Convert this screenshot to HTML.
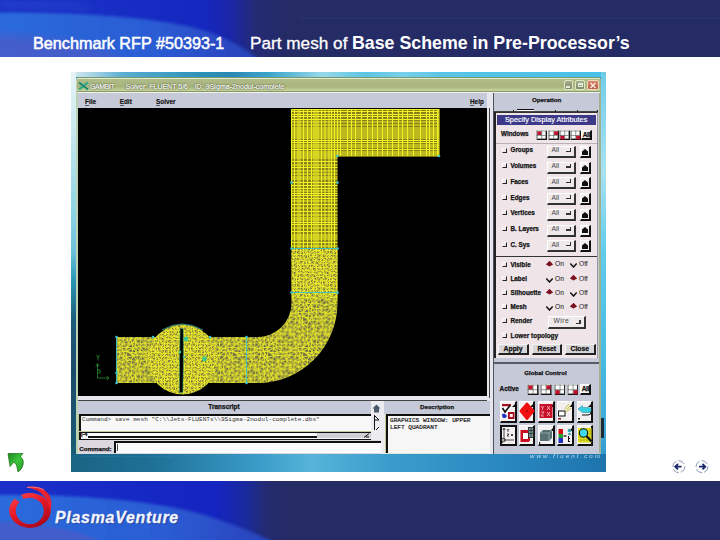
<!DOCTYPE html><html><head><meta charset="utf-8"><style>
*{margin:0;padding:0;box-sizing:border-box}
html,body{width:720px;height:540px;overflow:hidden;background:#fff;font-family:"Liberation Sans",sans-serif}
.a{position:absolute}
.ht{color:#fff;white-space:nowrap;line-height:1}
.t{position:absolute;white-space:nowrap;line-height:1}
.mono{font-family:"Liberation Mono",monospace}
</style></head><body>
<svg class="a" style="left:0;top:0" width="720" height="57" viewBox="0 0 720 57">
<defs>
<linearGradient id="hg" x1="0" x2="1" y1="0" y2="0"><stop offset="0" stop-color="#1c34c8"/><stop offset=".28" stop-color="#1428c0"/><stop offset=".32" stop-color="#1a26a8"/><stop offset=".355" stop-color="#242b74"/><stop offset=".40" stop-color="#242b65"/><stop offset="1" stop-color="#242b65"/></linearGradient>
<linearGradient id="hs" x1="0" x2="1" y1="0" y2="0"><stop offset="0" stop-color="#2c6cdc"/><stop offset=".6" stop-color="#2a5cd4"/><stop offset="1" stop-color="#2840b8"/></linearGradient>
<filter id="bl" x="-20%" y="-50%" width="140%" height="200%"><feGaussianBlur stdDeviation="1.6"/></filter><filter id="bl3" x="-20%" y="-50%" width="140%" height="200%"><feGaussianBlur stdDeviation="4"/></filter>
</defs>
<rect width="720" height="57" fill="url(#hg)"/>
<path d="M-10,13 C60,12 140,15 195,28 C225,36 245,48 262,62 L-10,62 Z" fill="url(#hs)" filter="url(#bl)"/>
<path d="M-10,34 C40,36 90,42 130,62 L-10,62 Z" fill="#4a5cc8" opacity=".85" filter="url(#bl3)"/>
<path d="M0,4 C30,3 60,5 90,8" stroke="#4a78e0" stroke-width="4" opacity=".3" fill="none" filter="url(#bl3)"/>
<path d="M300,18 H720" stroke="#3a4aa0" stroke-width="1" opacity=".35"/>
</svg>
<div class="a ht" style="left:33px;top:35px;font-size:16.2px;-webkit-text-stroke:.5px #fff">Benchmark RFP #50393-1</div>
<div class="a ht" style="left:250px;top:34.5px;font-size:17.2px;-webkit-text-stroke:.3px #fff">Part mesh of</div>
<div class="a ht" style="left:352px;top:35px;font-size:17.8px;font-weight:bold">Base Scheme in Pre-Processor’s</div>
<div class="a" style="left:71px;top:72px;width:535px;height:400px;background:#2a8cb8"></div>
<div class="a" style="left:71px;top:72px;width:535px;height:5px;background:linear-gradient(90deg,#d8ecf0 0%,#a8d4e4 4%,#58acd0 10%,#2a90b8 25%,#2a88b4 30%,#3aa4cc 37%,#98d8ea 47%,#5cc4e4 55%,#78d0ea 62%,#58c4e6 70%,#48c0e8 100%)"></div>
<div class="a" style="left:71px;top:72px;width:5px;height:400px;background:linear-gradient(180deg,#e8f4f6 0%,#c8e8f0 15%,#8cd4e6 35%,#6cc0dc 45%,#2a98b8 52%,#1c5c7c 62%,#1a4a6a 75%,#1a6078 100%)"></div>
<div class="a" style="left:601px;top:72px;width:5px;height:400px;background:linear-gradient(180deg,#70cce8 0%,#a8e2f2 25%,#60ccec 45%,#48bce4 70%,#3aa8d8 90%,#2a90c4 100%)"></div>
<div class="a" style="left:71px;top:454px;width:535px;height:18px;background:linear-gradient(90deg,#1a6484 0%,#1e7096 15%,#3a9cc8 35%,#56b4d8 45%,#3a9ccc 60%,#2a88c0 80%,#1e74ac 100%)"></div>
<div class="a" style="left:76px;top:77px;width:525px;height:377px;background:#c0ca98;border:1px solid #7a9870;border-left:2px solid #bcd2b4;border-bottom:1px solid #dce8d4;border-right:2px solid #a0b090;border-radius:3px 3px 0 0"></div>
<div class="a" style="left:77px;top:78px;width:523px;height:15px;background:linear-gradient(180deg,#e0ecd0 0px,#e0ecd0 1px,#b0bc88 1.5px,#a8b47c 9px,#c4d098 12px,#c4d098 12.8px,#8a9a70 13.5px,#8a9a70 14px,#eef2e8 14.2px)"></div>
<svg class="a" style="left:78px;top:82px" width="11" height="8" viewBox="0 0 11 8"><path d="M1,0.5 L10,7.5 M10,0.5 L1,7.5" stroke="#2aa888" stroke-width="2.2"/><path d="M1,0.5 L10,7.5" stroke="#145a48" stroke-width="0.8"/></svg>
<div class="t" style="left:90px;top:83.1px;font-size:7px;color:#ffffff;text-shadow:0 0 1px #3a4420,0 0 1px #3a4420,0 0 2px #6a7848;-webkit-text-stroke:.2px #fff;letter-spacing:-.4px">GAMBIT</div>
<div class="t" style="left:125.5px;top:83.1px;font-size:7px;color:#ffffff;text-shadow:0 0 1px #3a4420,0 0 1px #3a4420,0 0 2px #6a7848;-webkit-text-stroke:.2px #fff">Solver: FLUENT 5/6</div>
<div class="t" style="left:194.6px;top:83.1px;font-size:7px;color:#ffffff;text-shadow:0 0 1px #3a4420,0 0 1px #3a4420,0 0 2px #6a7848;-webkit-text-stroke:.2px #fff;letter-spacing:.05px">ID: 9Sigma-2nodul-complete</div>
<div class="a" style="left:563.5px;top:80px;width:9.5px;height:10px;background:linear-gradient(180deg,#a4b088,#7c8a68);border:1px solid #dfe6c6;border-radius:2px"></div>
<div class="a" style="left:566px;top:86px;width:4px;height:2px;background:#e8eedc"></div>
<div class="a" style="left:575px;top:80px;width:10px;height:10px;background:linear-gradient(180deg,#a4b088,#7c8a68);border:1px solid #dfe6c6;border-radius:2px"></div>
<div class="a" style="left:577.5px;top:83px;width:5px;height:4px;border:1px solid #e8eedc;border-top-width:2px"></div>
<div class="a" style="left:587px;top:80px;width:11.5px;height:10px;background:linear-gradient(180deg,#d8886c,#b85a40);border:1px solid #f0d8c0;border-radius:2px"></div>
<svg class="a" style="left:589px;top:81.5px" width="8" height="7" viewBox="0 0 8 7"><path d="M1.5,1 L6.5,6 M6.5,1 L1.5,6" stroke="#fbeee6" stroke-width="1.4"/></svg>
<div class="a" style="left:78px;top:93px;width:411px;height:15px;background:#c6c9d7"></div>
<div class="t" style="left:85px;top:98.5px;font-size:6.4px;color:#111;font-weight:bold;-webkit-text-stroke:.15px #111">File</div>
<div class="a" style="left:85px;top:104.5px;width:4px;height:1px;background:#556"></div>
<div class="t" style="left:119.7px;top:98.5px;font-size:6.4px;color:#111;font-weight:bold;-webkit-text-stroke:.15px #111">Edit</div>
<div class="a" style="left:120px;top:104.5px;width:4px;height:1px;background:#556"></div>
<div class="t" style="left:156px;top:98.5px;font-size:6.4px;color:#111;font-weight:bold;-webkit-text-stroke:.15px #111">Solver</div>
<div class="a" style="left:156px;top:104.5px;width:4px;height:1px;background:#556"></div>
<div class="t" style="left:470px;top:98.5px;font-size:6.4px;color:#111;font-weight:bold;-webkit-text-stroke:.15px #111">Help</div>
<div class="a" style="left:470px;top:104.5px;width:4px;height:1px;background:#556"></div>
<div class="a" style="left:487px;top:93px;width:7px;height:361px;background:#e6e6ec"></div>
<div class="a" style="left:489px;top:108px;width:1px;height:290px;background:#444"></div>
<div class="a" style="left:493px;top:93px;width:1px;height:361px;background:#505060"></div>
<div class="a" style="left:78px;top:108px;width:409px;height:288px;background:#000"></div>
<svg class="a" style="left:0;top:0" width="720" height="540" viewBox="0 0 720 540"><defs><clipPath id="gc"><rect x="78" y="108" width="409" height="288"/></clipPath><pattern id="pu" width="35.2" height="35.2" patternUnits="userSpaceOnUse"><rect width="35.2" height="35.2" fill="#6a6a48"/><path d="M-5.1 -5.2L-0.9 -5.1M-5.1 -5.2L-4.4 0.3M-5.1 -5.2L-0.4 -0.8M-4.4 0.3L-0.4 -0.8M-4.4 0.3L-4.0 3.3M-4.4 0.3L0.4 3.4M-4.0 3.3L0.4 3.4M-4.0 3.3L-3.4 9.5M-4.0 3.3L0.1 8.5M-3.4 9.5L0.1 8.5M-3.4 9.5L-3.5 13.9M-3.4 9.5L-1.1 13.2M-3.5 13.9L-1.1 13.2M-3.5 13.9L-4.7 17.4M-3.5 13.9L-1.1 17.4M-4.7 17.4L-1.1 17.4M-4.7 17.4L-5.4 22.3M-4.7 17.4L-1.0 21.0M-5.4 22.3L-1.0 21.0M-5.4 22.3L-5.5 25.4M-5.4 22.3L-0.2 27.2M-5.5 25.4L-0.2 27.2M-5.5 25.4L-5.1 30.0M-0.2 27.2L-5.1 30.0M-5.1 30.0L-0.9 30.1M-5.1 30.0L-4.4 35.5M-0.9 30.1L-4.4 35.5M-4.4 35.5L-0.4 34.4M-4.4 35.5L-4.0 38.5M-4.4 35.5L0.4 38.6M-0.9 -5.1L4.7 -4.7M-0.9 -5.1L-0.4 -0.8M-0.9 -5.1L4.7 1.1M-0.4 -0.8L4.7 1.1M-0.4 -0.8L0.4 3.4M-0.4 -0.8L4.6 4.2M0.4 3.4L4.6 4.2M0.4 3.4L0.1 8.5M0.4 3.4L5.5 7.7M0.1 8.5L5.5 7.7M0.1 8.5L-1.1 13.2M0.1 8.5L5.3 12.7M-1.1 13.2L5.3 12.7M-1.1 13.2L-1.1 17.4M5.3 12.7L-1.1 17.4M-1.1 17.4L3.5 16.7M-1.1 17.4L-1.0 21.0M3.5 16.7L-1.0 21.0M-1.0 21.0L3.9 22.8M-1.0 21.0L-0.2 27.2M-1.0 21.0L3.6 26.6M-0.2 27.2L3.6 26.6M-0.2 27.2L-0.9 30.1M-0.2 27.2L4.7 30.5M-0.9 30.1L4.7 30.5M-0.9 30.1L-0.4 34.4M-0.9 30.1L4.7 36.3M-0.4 34.4L4.7 36.3M-0.4 34.4L0.4 38.6M-0.4 34.4L4.6 39.4M4.7 -4.7L8.9 -3.5M4.7 -4.7L4.7 1.1M4.7 -4.7L8.9 -1.0M4.7 1.1L8.9 -1.0M4.7 1.1L4.6 4.2M4.7 1.1L7.7 3.7M4.6 4.2L7.7 3.7M4.6 4.2L5.5 7.7M7.7 3.7L5.5 7.7M5.5 7.7L9.2 8.6M5.5 7.7L5.3 12.7M5.5 7.7L8.4 13.4M5.3 12.7L8.4 13.4M5.3 12.7L3.5 16.7M5.3 12.7L8.7 17.1M3.5 16.7L8.7 17.1M3.5 16.7L3.9 22.8M8.7 17.1L3.9 22.8M3.9 22.8L9.5 22.5M3.9 22.8L3.6 26.6M9.5 22.5L3.6 26.6M3.6 26.6L8.2 26.6M3.6 26.6L4.7 30.5M3.6 26.6L8.9 31.7M4.7 30.5L8.9 31.7M4.7 30.5L4.7 36.3M8.9 31.7L4.7 36.3M4.7 36.3L8.9 34.2M4.7 36.3L4.6 39.4M4.7 36.3L7.7 38.9M8.9 -3.5L13.7 -4.2M8.9 -3.5L8.9 -1.0M13.7 -4.2L8.9 -1.0M8.9 -1.0L13.8 -0.5M8.9 -1.0L7.7 3.7M13.8 -0.5L7.7 3.7M7.7 3.7L14.4 3.5M7.7 3.7L9.2 8.6M14.4 3.5L9.2 8.6M9.2 8.6L13.0 9.4M9.2 8.6L8.4 13.4M13.0 9.4L8.4 13.4M8.4 13.4L12.4 13.2M8.4 13.4L8.7 17.1M8.4 13.4L12.1 18.0M8.7 17.1L12.1 18.0M8.7 17.1L9.5 22.5M8.7 17.1L13.8 22.2M9.5 22.5L13.8 22.2M9.5 22.5L8.2 26.6M9.5 22.5L14.1 26.0M8.2 26.6L14.1 26.0M8.2 26.6L8.9 31.7M14.1 26.0L8.9 31.7M8.9 31.7L13.7 31.0M8.9 31.7L8.9 34.2M13.7 31.0L8.9 34.2M8.9 34.2L13.8 34.7M8.9 34.2L7.7 38.9M13.8 34.7L7.7 38.9M13.7 -4.2L16.5 -4.5M13.7 -4.2L13.8 -0.5M13.7 -4.2L17.8 -0.1M13.8 -0.5L17.8 -0.1M13.8 -0.5L14.4 3.5M13.8 -0.5L18.4 5.5M14.4 3.5L18.4 5.5M14.4 3.5L13.0 9.4M18.4 5.5L13.0 9.4M13.0 9.4L17.5 9.2M13.0 9.4L12.4 13.2M17.5 9.2L12.4 13.2M12.4 13.2L16.5 13.7M12.4 13.2L12.1 18.0M16.5 13.7L12.1 18.0M12.1 18.0L18.0 18.8M12.1 18.0L13.8 22.2M18.0 18.8L13.8 22.2M13.8 22.2L18.4 21.5M13.8 22.2L14.1 26.0M18.4 21.5L14.1 26.0M14.1 26.0L17.3 26.8M14.1 26.0L13.7 31.0M17.3 26.8L13.7 31.0M13.7 31.0L16.5 30.7M13.7 31.0L13.8 34.7M13.7 31.0L17.8 35.1M13.8 34.7L17.8 35.1M13.8 34.7L14.4 38.7M17.8 35.1L14.4 38.7M16.5 -4.5L21.5 -4.6M16.5 -4.5L17.8 -0.1M16.5 -4.5L21.2 -0.9M17.8 -0.1L21.2 -0.9M17.8 -0.1L18.4 5.5M17.8 -0.1L20.9 5.0M18.4 5.5L20.9 5.0M18.4 5.5L17.5 9.2M18.4 5.5L21.1 8.2M17.5 9.2L21.1 8.2M17.5 9.2L16.5 13.7M17.5 9.2L21.7 14.1M16.5 13.7L21.7 14.1M16.5 13.7L18.0 18.8M16.5 13.7L21.0 17.5M18.0 18.8L21.0 17.5M18.0 18.8L18.4 21.5M21.0 17.5L18.4 21.5M18.4 21.5L22.1 22.9M18.4 21.5L17.3 26.8M22.1 22.9L17.3 26.8M17.3 26.8L22.8 27.3M17.3 26.8L16.5 30.7M17.3 26.8L21.5 30.6M16.5 30.7L21.5 30.6M16.5 30.7L17.8 35.1M21.5 30.6L17.8 35.1M17.8 35.1L21.2 34.3M17.8 35.1L18.4 40.7M21.2 34.3L18.4 40.7M21.5 -4.6L27.5 -3.9M21.5 -4.6L21.2 -0.9M27.5 -3.9L21.2 -0.9M21.2 -0.9L26.1 0.9M21.2 -0.9L20.9 5.0M21.2 -0.9L27.5 3.6M20.9 5.0L27.5 3.6M20.9 5.0L21.1 8.2M20.9 5.0L25.6 8.2M21.1 8.2L25.6 8.2M21.1 8.2L21.7 14.1M21.1 8.2L25.8 13.2M21.7 14.1L25.8 13.2M21.7 14.1L21.0 17.5M21.7 14.1L26.6 17.0M21.0 17.5L26.6 17.0M21.0 17.5L22.1 22.9M21.0 17.5L25.2 21.8M22.1 22.9L25.2 21.8M22.1 22.9L22.8 27.3M25.2 21.8L22.8 27.3M22.8 27.3L26.1 26.6M22.8 27.3L21.5 30.6M26.1 26.6L21.5 30.6M21.5 30.6L27.5 31.3M21.5 30.6L21.2 34.3M27.5 31.3L21.2 34.3M21.2 34.3L26.1 36.1M21.2 34.3L20.9 40.2M21.2 34.3L27.5 38.8M27.5 -3.9L30.1 -5.2M27.5 -3.9L26.1 0.9M30.1 -5.2L26.1 0.9M26.1 0.9L30.8 0.3M26.1 0.9L27.5 3.6M30.8 0.3L27.5 3.6M27.5 3.6L31.2 3.3M27.5 3.6L25.6 8.2M27.5 3.6L31.8 9.5M25.6 8.2L31.8 9.5M25.6 8.2L25.8 13.2M31.8 9.5L25.8 13.2M25.8 13.2L31.7 13.9M25.8 13.2L26.6 17.0M31.7 13.9L26.6 17.0M26.6 17.0L30.5 17.4M26.6 17.0L25.2 21.8M30.5 17.4L25.2 21.8M25.2 21.8L29.8 22.3M25.2 21.8L26.1 26.6M29.8 22.3L26.1 26.6M26.1 26.6L29.7 25.4M26.1 26.6L27.5 31.3M26.1 26.6L30.1 30.0M27.5 31.3L30.1 30.0M27.5 31.3L26.1 36.1M27.5 31.3L30.8 35.5M26.1 36.1L30.8 35.5M26.1 36.1L27.5 38.8M30.8 35.5L27.5 38.8M30.1 -5.2L34.3 -5.1M30.1 -5.2L30.8 0.3M30.1 -5.2L34.8 -0.8M30.8 0.3L34.8 -0.8M30.8 0.3L31.2 3.3M34.8 -0.8L31.2 3.3M31.2 3.3L35.6 3.4M31.2 3.3L31.8 9.5M35.6 3.4L31.8 9.5M31.8 9.5L35.3 8.5M31.8 9.5L31.7 13.9M31.8 9.5L34.1 13.2M31.7 13.9L34.1 13.2M31.7 13.9L30.5 17.4M31.7 13.9L34.1 17.4M30.5 17.4L34.1 17.4M30.5 17.4L29.8 22.3M34.1 17.4L29.8 22.3M29.8 22.3L34.2 21.0M29.8 22.3L29.7 25.4M34.2 21.0L29.7 25.4M29.7 25.4L35.0 27.2M29.7 25.4L30.1 30.0M29.7 25.4L34.3 30.1M30.1 30.0L34.3 30.1M30.1 30.0L30.8 35.5M30.1 30.0L34.8 34.4M30.8 35.5L34.8 34.4M30.8 35.5L31.2 38.5M30.8 35.5L35.6 38.6M34.3 -5.1L39.9 -4.7M34.3 -5.1L34.8 -0.8M39.9 -4.7L34.8 -0.8M34.8 -0.8L39.9 1.1M34.8 -0.8L35.6 3.4M39.9 1.1L35.6 3.4M35.6 3.4L39.8 4.2M35.6 3.4L35.3 8.5M35.6 3.4L40.7 7.7M35.3 8.5L40.7 7.7M35.3 8.5L34.1 13.2M40.7 7.7L34.1 13.2M34.1 13.2L40.5 12.7M34.1 13.2L34.1 17.4M40.5 12.7L34.1 17.4M34.1 17.4L38.7 16.7M34.1 17.4L34.2 21.0M38.7 16.7L34.2 21.0M34.2 21.0L39.1 22.8M34.2 21.0L35.0 27.2M34.2 21.0L38.8 26.6M35.0 27.2L38.8 26.6M35.0 27.2L34.3 30.1M38.8 26.6L34.3 30.1M34.3 30.1L39.9 30.5M34.3 30.1L34.8 34.4M34.3 30.1L39.9 36.3M34.8 34.4L39.9 36.3M34.8 34.4L35.6 38.6M34.8 34.4L39.8 39.4" stroke="#e6e428" stroke-width="1" fill="none"/></pattern><pattern id="pd" width="33" height="33" patternUnits="userSpaceOnUse"><rect width="33" height="33" fill="#74723e"/><path d="M-3.9 -3.3L0.2 -2.5M-3.9 -3.3L-3.7 -0.5M-3.9 -3.3L0.9 0.3M-3.7 -0.5L0.9 0.3M-3.7 -0.5L-3.7 3.2M-3.7 -0.5L0.1 4.2M-3.7 3.2L0.1 4.2M-3.7 3.2L-4.0 6.5M-3.7 3.2L-0.1 7.3M-4.0 6.5L-0.1 7.3M-4.0 6.5L-3.8 10.8M-4.0 6.5L0.7 9.3M-3.8 10.8L0.7 9.3M-3.8 10.8L-2.4 13.3M-3.8 10.8L-0.5 12.8M-2.4 13.3L-0.5 12.8M-2.4 13.3L-3.8 17.4M-2.4 13.3L-0.5 16.7M-3.8 17.4L-0.5 16.7M-3.8 17.4L-3.7 19.5M-3.8 17.4L-0.5 19.6M-3.7 19.5L-0.5 19.6M-3.7 19.5L-4.3 22.9M-3.7 19.5L-0.7 23.9M-4.3 22.9L-0.7 23.9M-4.3 22.9L-3.4 26.4M-0.7 23.9L-3.4 26.4M-3.4 26.4L-0.3 26.3M-3.4 26.4L-3.9 29.7M-0.3 26.3L-3.9 29.7M-3.9 29.7L0.2 30.5M-3.9 29.7L-3.7 32.5M0.2 30.5L-3.7 32.5M-3.7 32.5L0.9 33.3M-3.7 32.5L-3.7 36.2M0.9 33.3L-3.7 36.2M0.2 -2.5L2.5 -3.2M0.2 -2.5L0.9 0.3M2.5 -3.2L0.9 0.3M0.9 0.3L3.1 0.8M0.9 0.3L0.1 4.2M3.1 0.8L0.1 4.2M0.1 4.2L3.3 3.4M0.1 4.2L-0.1 7.3M0.1 4.2L3.3 5.6M-0.1 7.3L3.3 5.6M-0.1 7.3L0.7 9.3M-0.1 7.3L3.2 9.3M0.7 9.3L3.2 9.3M0.7 9.3L-0.5 12.8M3.2 9.3L-0.5 12.8M-0.5 12.8L2.3 13.8M-0.5 12.8L-0.5 16.7M-0.5 12.8L2.6 16.4M-0.5 16.7L2.6 16.4M-0.5 16.7L-0.5 19.6M2.6 16.4L-0.5 19.6M-0.5 19.6L3.8 19.9M-0.5 19.6L-0.7 23.9M3.8 19.9L-0.7 23.9M-0.7 23.9L3.0 23.1M-0.7 23.9L-0.3 26.3M-0.7 23.9L3.4 27.0M-0.3 26.3L3.4 27.0M-0.3 26.3L0.2 30.5M3.4 27.0L0.2 30.5M0.2 30.5L2.5 29.8M0.2 30.5L0.9 33.3M2.5 29.8L0.9 33.3M0.9 33.3L3.1 33.8M0.9 33.3L0.1 37.2M3.1 33.8L0.1 37.2M2.5 -3.2L7.5 -3.8M2.5 -3.2L3.1 0.8M7.5 -3.8L3.1 0.8M3.1 0.8L6.1 -0.4M3.1 0.8L3.3 3.4M6.1 -0.4L3.3 3.4M3.3 3.4L7.1 3.3M3.3 3.4L3.3 5.6M3.3 3.4L6.7 7.1M3.3 5.6L6.7 7.1M3.3 5.6L3.2 9.3M6.7 7.1L3.2 9.3M3.2 9.3L7.4 9.8M3.2 9.3L2.3 13.8M7.4 9.8L2.3 13.8M2.3 13.8L6.8 13.2M2.3 13.8L2.6 16.4M6.8 13.2L2.6 16.4M2.6 16.4L6.6 16.9M2.6 16.4L3.8 19.9M6.6 16.9L3.8 19.9M3.8 19.9L6.5 19.9M3.8 19.9L3.0 23.1M6.5 19.9L3.0 23.1M3.0 23.1L6.6 24.0M3.0 23.1L3.4 27.0M6.6 24.0L3.4 27.0M3.4 27.0L7.0 27.2M3.4 27.0L2.5 29.8M7.0 27.2L2.5 29.8M2.5 29.8L7.5 29.2M2.5 29.8L3.1 33.8M7.5 29.2L3.1 33.8M3.1 33.8L6.1 32.6M3.1 33.8L3.3 36.4M6.1 32.6L3.3 36.4M7.5 -3.8L9.3 -2.4M7.5 -3.8L6.1 -0.4M7.5 -3.8L10.0 0.9M6.1 -0.4L10.0 0.9M6.1 -0.4L7.1 3.3M6.1 -0.4L10.6 2.6M7.1 3.3L10.6 2.6M7.1 3.3L6.7 7.1M7.1 3.3L9.1 6.5M6.7 7.1L9.1 6.5M6.7 7.1L7.4 9.8M6.7 7.1L9.0 9.4M7.4 9.8L9.0 9.4M7.4 9.8L6.8 13.2M7.4 9.8L9.0 13.5M6.8 13.2L9.0 13.5M6.8 13.2L6.6 16.9M9.0 13.5L6.6 16.9M6.6 16.9L10.5 17.3M6.6 16.9L6.5 19.9M10.5 17.3L6.5 19.9M6.5 19.9L9.2 20.2M6.5 19.9L6.6 24.0M9.2 20.2L6.6 24.0M6.6 24.0L10.2 22.4M6.6 24.0L7.0 27.2M10.2 22.4L7.0 27.2M7.0 27.2L10.7 27.3M7.0 27.2L7.5 29.2M10.7 27.3L7.5 29.2M7.5 29.2L9.3 30.6M7.5 29.2L6.1 32.6M7.5 29.2L10.0 33.9M6.1 32.6L10.0 33.9M6.1 32.6L7.1 36.3M6.1 32.6L10.6 35.6M9.3 -2.4L12.3 -2.3M9.3 -2.4L10.0 0.9M12.3 -2.3L10.0 0.9M10.0 0.9L13.0 -0.0M10.0 0.9L10.6 2.6M13.0 -0.0L10.6 2.6M10.6 2.6L14.2 4.0M10.6 2.6L9.1 6.5M14.2 4.0L9.1 6.5M9.1 6.5L12.5 6.5M9.1 6.5L9.0 9.4M12.5 6.5L9.0 9.4M9.0 9.4L13.2 9.6M9.0 9.4L9.0 13.5M13.2 9.6L9.0 13.5M9.0 13.5L12.6 12.8M9.0 13.5L10.5 17.3M9.0 13.5L13.6 15.5M10.5 17.3L13.6 15.5M10.5 17.3L9.2 20.2M13.6 15.5L9.2 20.2M9.2 20.2L13.3 19.7M9.2 20.2L10.2 22.4M9.2 20.2L12.2 22.8M10.2 22.4L12.2 22.8M10.2 22.4L10.7 27.3M10.2 22.4L13.4 26.4M10.7 27.3L13.4 26.4M10.7 27.3L9.3 30.6M10.7 27.3L12.3 30.7M9.3 30.6L12.3 30.7M9.3 30.6L10.0 33.9M12.3 30.7L10.0 33.9M10.0 33.9L13.0 33.0M10.0 33.9L10.6 35.6M10.0 33.9L14.2 37.0M12.3 -2.3L16.9 -3.4M12.3 -2.3L13.0 -0.0M16.9 -3.4L13.0 -0.0M13.0 -0.0L17.1 0.9M13.0 -0.0L14.2 4.0M17.1 0.9L14.2 4.0M14.2 4.0L15.7 2.8M14.2 4.0L12.5 6.5M14.2 4.0L15.6 7.2M12.5 6.5L15.6 7.2M12.5 6.5L13.2 9.6M12.5 6.5L16.0 9.2M13.2 9.6L16.0 9.2M13.2 9.6L12.6 12.8M13.2 9.6L16.3 14.0M12.6 12.8L16.3 14.0M12.6 12.8L13.6 15.5M16.3 14.0L13.6 15.5M13.6 15.5L17.1 16.0M13.6 15.5L13.3 19.7M17.1 16.0L13.3 19.7M13.3 19.7L15.8 20.6M13.3 19.7L12.2 22.8M15.8 20.6L12.2 22.8M12.2 22.8L16.6 23.5M12.2 22.8L13.4 26.4M16.6 23.5L13.4 26.4M13.4 26.4L15.7 25.5M13.4 26.4L12.3 30.7M13.4 26.4L16.9 29.6M12.3 30.7L16.9 29.6M12.3 30.7L13.0 33.0M12.3 30.7L17.1 33.9M13.0 33.0L17.1 33.9M13.0 33.0L14.2 37.0M13.0 33.0L15.7 35.8M16.9 -3.4L18.9 -3.9M16.9 -3.4L17.1 0.9M18.9 -3.9L17.1 0.9M17.1 0.9L18.9 0.9M17.1 0.9L15.7 2.8M17.1 0.9L20.1 3.9M15.7 2.8L20.1 3.9M15.7 2.8L15.6 7.2M20.1 3.9L15.6 7.2M15.6 7.2L19.0 7.3M15.6 7.2L16.0 9.2M15.6 7.2L18.9 10.6M16.0 9.2L18.9 10.6M16.0 9.2L16.3 14.0M16.0 9.2L19.7 12.9M16.3 14.0L19.7 12.9M16.3 14.0L17.1 16.0M16.3 14.0L19.9 17.4M17.1 16.0L19.9 17.4M17.1 16.0L15.8 20.6M19.9 17.4L15.8 20.6M15.8 20.6L19.3 19.1M15.8 20.6L16.6 23.5M19.3 19.1L16.6 23.5M16.6 23.5L19.9 22.6M16.6 23.5L15.7 25.5M19.9 22.6L15.7 25.5M15.7 25.5L19.0 25.7M15.7 25.5L16.9 29.6M15.7 25.5L18.9 29.1M16.9 29.6L18.9 29.1M16.9 29.6L17.1 33.9M18.9 29.1L17.1 33.9M17.1 33.9L18.9 33.9M17.1 33.9L15.7 35.8M17.1 33.9L20.1 36.9M18.9 -3.9L23.1 -2.6M18.9 -3.9L18.9 0.9M18.9 -3.9L22.7 -0.4M18.9 0.9L22.7 -0.4M18.9 0.9L20.1 3.9M18.9 0.9L23.6 2.9M20.1 3.9L23.6 2.9M20.1 3.9L19.0 7.3M23.6 2.9L19.0 7.3M19.0 7.3L23.1 6.0M19.0 7.3L18.9 10.6M19.0 7.3L22.8 8.9M18.9 10.6L22.8 8.9M18.9 10.6L19.7 12.9M22.8 8.9L19.7 12.9M19.7 12.9L22.6 12.2M19.7 12.9L19.9 17.4M22.6 12.2L19.9 17.4M19.9 17.4L23.6 16.6M19.9 17.4L19.3 19.1M19.9 17.4L22.5 19.7M19.3 19.1L22.5 19.7M19.3 19.1L19.9 22.6M19.3 19.1L24.0 22.3M19.9 22.6L24.0 22.3M19.9 22.6L19.0 25.7M24.0 22.3L19.0 25.7M19.0 25.7L23.7 26.3M19.0 25.7L18.9 29.1M23.7 26.3L18.9 29.1M18.9 29.1L23.1 30.4M18.9 29.1L18.9 33.9M18.9 29.1L22.7 32.6M18.9 33.9L22.7 32.6M18.9 33.9L20.1 36.9M18.9 33.9L23.6 35.9M23.1 -2.6L27.1 -3.0M23.1 -2.6L22.7 -0.4M23.1 -2.6L26.2 0.0M22.7 -0.4L26.2 0.0M22.7 -0.4L23.6 2.9M26.2 0.0L23.6 2.9M23.6 2.9L26.8 4.3M23.6 2.9L23.1 6.0M23.6 2.9L26.1 7.3M23.1 6.0L26.1 7.3M23.1 6.0L22.8 8.9M26.1 7.3L22.8 8.9M22.8 8.9L26.8 10.2M22.8 8.9L22.6 12.2M22.8 8.9L26.2 12.9M22.6 12.2L26.2 12.9M22.6 12.2L23.6 16.6M26.2 12.9L23.6 16.6M23.6 16.6L25.5 15.8M23.6 16.6L22.5 19.7M25.5 15.8L22.5 19.7M22.5 19.7L25.5 20.3M22.5 19.7L24.0 22.3M22.5 19.7L25.9 22.4M24.0 22.3L25.9 22.4M24.0 22.3L23.7 26.3M25.9 22.4L23.7 26.3M23.7 26.3L25.6 27.1M23.7 26.3L23.1 30.4M25.6 27.1L23.1 30.4M23.1 30.4L27.1 30.0M23.1 30.4L22.7 32.6M27.1 30.0L22.7 32.6M22.7 32.6L26.2 33.0M22.7 32.6L23.6 35.9M26.2 33.0L23.6 35.9M27.1 -3.0L29.1 -3.3M27.1 -3.0L26.2 0.0M27.1 -3.0L29.3 -0.5M26.2 0.0L29.3 -0.5M26.2 0.0L26.8 4.3M29.3 -0.5L26.8 4.3M26.8 4.3L29.3 3.2M26.8 4.3L26.1 7.3M26.8 4.3L29.0 6.5M26.1 7.3L29.0 6.5M26.1 7.3L26.8 10.2M26.1 7.3L29.2 10.8M26.8 10.2L29.2 10.8M26.8 10.2L26.2 12.9M26.8 10.2L30.6 13.3M26.2 12.9L30.6 13.3M26.2 12.9L25.5 15.8M26.2 12.9L29.2 17.4M25.5 15.8L29.2 17.4M25.5 15.8L25.5 20.3M25.5 15.8L29.3 19.5M25.5 20.3L29.3 19.5M25.5 20.3L25.9 22.4M25.5 20.3L28.7 22.9M25.9 22.4L28.7 22.9M25.9 22.4L25.6 27.1M25.9 22.4L29.6 26.4M25.6 27.1L29.6 26.4M25.6 27.1L27.1 30.0M25.6 27.1L29.1 29.7M27.1 30.0L29.1 29.7M27.1 30.0L26.2 33.0M27.1 30.0L29.3 32.5M26.2 33.0L29.3 32.5M26.2 33.0L26.8 37.3M29.3 32.5L26.8 37.3M29.1 -3.3L33.2 -2.5M29.1 -3.3L29.3 -0.5M29.1 -3.3L33.9 0.3M29.3 -0.5L33.9 0.3M29.3 -0.5L29.3 3.2M33.9 0.3L29.3 3.2M29.3 3.2L33.1 4.2M29.3 3.2L29.0 6.5M33.1 4.2L29.0 6.5M29.0 6.5L32.9 7.3M29.0 6.5L29.2 10.8M29.0 6.5L33.7 9.3M29.2 10.8L33.7 9.3M29.2 10.8L30.6 13.3M33.7 9.3L30.6 13.3M30.6 13.3L32.5 12.8M30.6 13.3L29.2 17.4M32.5 12.8L29.2 17.4M29.2 17.4L32.5 16.7M29.2 17.4L29.3 19.5M32.5 16.7L29.3 19.5M29.3 19.5L32.5 19.6M29.3 19.5L28.7 22.9M29.3 19.5L32.3 23.9M28.7 22.9L32.3 23.9M28.7 22.9L29.6 26.4M28.7 22.9L32.7 26.3M29.6 26.4L32.7 26.3M29.6 26.4L29.1 29.7M29.6 26.4L33.2 30.5M29.1 29.7L33.2 30.5M29.1 29.7L29.3 32.5M33.2 30.5L29.3 32.5M29.3 32.5L33.9 33.3M29.3 32.5L29.3 36.2M33.9 33.3L29.3 36.2M33.2 -2.5L35.5 -3.2M33.2 -2.5L33.9 0.3M33.2 -2.5L36.1 0.8M33.9 0.3L36.1 0.8M33.9 0.3L33.1 4.2M33.9 0.3L36.3 3.4M33.1 4.2L36.3 3.4M33.1 4.2L32.9 7.3M33.1 4.2L36.3 5.6M32.9 7.3L36.3 5.6M32.9 7.3L33.7 9.3M32.9 7.3L36.2 9.3M33.7 9.3L36.2 9.3M33.7 9.3L32.5 12.8M33.7 9.3L35.3 13.8M32.5 12.8L35.3 13.8M32.5 12.8L32.5 16.7M35.3 13.8L32.5 16.7M32.5 16.7L35.6 16.4M32.5 16.7L32.5 19.6M32.5 16.7L36.8 19.9M32.5 19.6L36.8 19.9M32.5 19.6L32.3 23.9M36.8 19.9L32.3 23.9M32.3 23.9L36.0 23.1M32.3 23.9L32.7 26.3M32.3 23.9L36.4 27.0M32.7 26.3L36.4 27.0M32.7 26.3L33.2 30.5M32.7 26.3L35.5 29.8M33.2 30.5L35.5 29.8M33.2 30.5L33.9 33.3M35.5 29.8L33.9 33.3M33.9 33.3L36.1 33.8M33.9 33.3L33.1 37.2M33.9 33.3L36.3 36.4" stroke="#ecea2a" stroke-width="1" fill="none"/></pattern></defs><g clip-path="url(#gc)"><path d="M291.5,109 H439 V156 H337.5 V248.5 H291.5 Z" fill="#86801c"/><path d="M291.5 109V248.5M294.5 109V248.5M298.0 109V248.5M300.0 109V248.5M303.5 109V248.5M307.5 109V248.5M311.5 109V248.5M314.0 109V248.5M316.0 109V248.5M318.0 109V248.5M321.5 109V248.5M325.0 109V248.5M329.0 109V248.5M331.5 109V248.5M334.5 109V248.5M337.5 109V156M340.5 109V156M347.5 109V156M351.5 109V156M355.5 109V156M361.5 109V156M367.5 109V156M372.5 109V156M377.5 109V156M382.5 109V156M387.5 109V156M392.5 109V156M398.5 109V156M402.5 109V156M407.5 109V156M413.5 109V156M420.5 109V156M426.5 109V156M429.5 109V156M433.5 109V156M437.5 109V156M439 109V156M291.5 109.5H439M291.5 111.5H439M291.5 114.5H439M291.5 116.5H439M291.5 119.5H439M291.5 122.0H439M291.5 125.0H439M291.5 128.0H439M291.5 130.0H439M291.5 132.0H439M291.5 134.0H439M291.5 136.0H439M291.5 138.0H439M291.5 140.5H439M291.5 142.5H439M291.5 145.0H439M291.5 147.0H439M291.5 149.5H439M291.5 152.0H439M291.5 154.0H439M291.5 156.0H439M291.5 158.0H337.5M291.5 161.5H337.5M291.5 165.0H337.5M291.5 167.5H337.5M291.5 171.0H337.5M291.5 174.0H337.5M291.5 177.0H337.5M291.5 179.0H337.5M291.5 182.5H337.5M291.5 185.5H337.5M291.5 188.5H337.5M291.5 191.0H337.5M291.5 193.5H337.5M291.5 195.5H337.5M291.5 198.5H337.5M291.5 201.0H337.5M291.5 204.5H337.5M291.5 208.0H337.5M291.5 211.5H337.5M291.5 215.0H337.5M291.5 218.0H337.5M291.5 220.0H337.5M291.5 222.5H337.5M291.5 224.5H337.5M291.5 228.0H337.5M291.5 231.5H337.5M291.5 235.0H337.5M291.5 237.0H337.5M291.5 239.0H337.5M291.5 242.5H337.5M291.5 246.0H337.5" stroke="#f0f024" stroke-width="1.05" fill="none"/><path d="M291.5,248.5 H337.5 V303 A80,80 0 0 1 257.5,383 H116.5 V337 H257.5 A34,34 0 0 0 291.5,303 Z" fill="url(#pu)"/><rect x="291.5" y="248.5" width="46" height="50" fill="url(#pd)"/><circle cx="182.5" cy="359.5" r="35" fill="url(#pd)"/><path d="M180.2,328.5 H183.2 Q183.8,360 182.8,392.5 H179.6 Q179.2,360 180.2,328.5 Z" fill="#000" stroke="#30a888" stroke-width=".5"/><line x1="116.5" y1="336" x2="116.5" y2="384" stroke="#38c4d0" stroke-width="0.9"/><line x1="246.5" y1="336" x2="246.5" y2="384" stroke="#38c4d0" stroke-width="0.9"/><line x1="291.5" y1="248.5" x2="337.5" y2="248.5" stroke="#38c4d0" stroke-width="0.9"/><line x1="291.5" y1="292.5" x2="337.5" y2="292.5" stroke="#38c4d0" stroke-width="0.9"/><circle cx="116.5" cy="337" r="1.3" fill="#38c4d0"/><circle cx="116.5" cy="383" r="1.3" fill="#38c4d0"/><circle cx="246.5" cy="337" r="1.3" fill="#38c4d0"/><circle cx="246.5" cy="383" r="1.3" fill="#38c4d0"/><circle cx="291.5" cy="248.5" r="1.3" fill="#38c4d0"/><circle cx="337.5" cy="248.5" r="1.3" fill="#38c4d0"/><circle cx="291.5" cy="292.5" r="1.3" fill="#38c4d0"/><circle cx="337.5" cy="292.5" r="1.3" fill="#38c4d0"/><circle cx="291.5" cy="182.5" r="1.3" fill="#38c4d0"/><circle cx="337.5" cy="182.5" r="1.3" fill="#38c4d0"/><circle cx="337.5" cy="156" r="1.3" fill="#38c4d0"/><circle cx="439" cy="156" r="1.3" fill="#38c4d0"/><circle cx="153" cy="337" r="1.3" fill="#38c4d0"/><circle cx="210" cy="337" r="1.3" fill="#38c4d0"/><circle cx="116.5" cy="373" r="1.3" fill="#38c4d0"/><circle cx="186" cy="339" r="2.4" fill="#40c890"/><circle cx="204.5" cy="359" r="2.4" fill="#40c890"/><circle cx="180" cy="352" r="1.3" fill="#40c890"/><circle cx="184" cy="357" r="1.2" fill="#40c890"/><path d="M162,330 Q182,318 203,330" stroke="#40c0b0" stroke-width=".7" fill="none"/><g stroke="#2e8e2e" stroke-width=".8" fill="none"><path d="M97.5,378 V364 M95.8,366.5 L97.5,363.5 L99.2,366.5 M97.5,378 H109 M106.5,376 L109,378 L106.5,380 M96.5,355 L98,358 L99.5,355 M98,358 V360.5 M97.5,370 h2.5 v3 h-2.5"/></g></g></svg>
<div class="a" style="left:494px;top:93px;width:105px;height:361px;background:#c6c9d7"></div>
<div class="t" style="left:532px;top:97px;font-size:6.2px;color:#111;font-weight:bold;-webkit-text-stroke:.25px #111">Operation</div>
<div class="a" style="left:494px;top:110.8px;width:104px;height:1px;background:#444"></div>
<div class="a" style="left:516.5px;top:109.2px;width:17.5px;height:1.6px;background:#fafafa;border-top:1px solid #111"></div>
<div class="a" style="left:513px;top:109.5px;width:1.2px;height:2.5px;background:#222"></div>
<div class="a" style="left:555px;top:109.5px;width:1.2px;height:2.5px;background:#222"></div>
<div class="a" style="left:577px;top:109.5px;width:1.2px;height:2.5px;background:#222"></div>
<div class="a" style="left:597px;top:109.5px;width:1.2px;height:2.5px;background:#222"></div>
<div class="a" style="left:494px;top:112px;width:104px;height:246px;background:#efe5e9;border-left:2px solid #222;border-top:1.5px solid #333;border-right:1px solid #999"></div>
<div class="a" style="left:496.5px;top:115px;width:99.5px;height:10px;background:#3c3a88"></div>
<div class="t" style="left:505px;top:116.4px;font-size:7.3px;color:#fff;-webkit-text-stroke:.15px #fff">Specify Display Attributes</div>
<div class="t" style="left:501px;top:130.5px;font-size:6.3px;color:#111;font-weight:bold;-webkit-text-stroke:.25px #111">Windows</div>
<div class="a" style="left:496px;top:142.5px;width:101px;height:1px;background:#b8b0b4"></div>
<svg class="a" style="left:536px;top:129.5px" width="11" height="10" viewBox="0 0 11 10"><rect x="0" y="0" width="11" height="10" fill="#fdfdfd"/><rect x="9.6" y="0.6" width="1.4" height="9.4" fill="#151515"/><rect x="0.6" y="8.6" width="10.4" height="1.4" fill="#151515"/><rect x="0.6" y="0.6" width="0.8" height="8" fill="#2a3a34"/><rect x="0.6" y="0.6" width="9" height="0.8" fill="#2a3a34" opacity=".6"/><rect x="1.4" y="1.4" width="4.1" height="3.6" fill="#c0102c"/><rect x="5.45" y="0.6" width="0.7" height="8" fill="#3a4a40" opacity=".75"/><rect x="0.6" y="4.95" width="9" height="0.7" fill="#3a4a40" opacity=".8"/></svg>
<svg class="a" style="left:547.5px;top:129.5px" width="11" height="10" viewBox="0 0 11 10"><rect x="0" y="0" width="11" height="10" fill="#fdfdfd"/><rect x="9.6" y="0.6" width="1.4" height="9.4" fill="#151515"/><rect x="0.6" y="8.6" width="10.4" height="1.4" fill="#151515"/><rect x="0.6" y="0.6" width="0.8" height="8" fill="#2a3a34"/><rect x="0.6" y="0.6" width="9" height="0.8" fill="#2a3a34" opacity=".6"/><rect x="6.1" y="1.4" width="4.1" height="3.6" fill="#c0102c"/><rect x="5.45" y="0.6" width="0.7" height="8" fill="#3a4a40" opacity=".75"/><rect x="0.6" y="4.95" width="9" height="0.7" fill="#3a4a40" opacity=".8"/></svg>
<svg class="a" style="left:558.5px;top:129.5px" width="11" height="10" viewBox="0 0 11 10"><rect x="0" y="0" width="11" height="10" fill="#fdfdfd"/><rect x="9.6" y="0.6" width="1.4" height="9.4" fill="#151515"/><rect x="0.6" y="8.6" width="10.4" height="1.4" fill="#151515"/><rect x="0.6" y="0.6" width="0.8" height="8" fill="#2a3a34"/><rect x="0.6" y="0.6" width="9" height="0.8" fill="#2a3a34" opacity=".6"/><rect x="1.4" y="5.6" width="4.1" height="3.6" fill="#c0102c"/><rect x="5.45" y="0.6" width="0.7" height="8" fill="#3a4a40" opacity=".75"/><rect x="0.6" y="4.95" width="9" height="0.7" fill="#3a4a40" opacity=".8"/></svg>
<svg class="a" style="left:569.5px;top:129.5px" width="11" height="10" viewBox="0 0 11 10"><rect x="0" y="0" width="11" height="10" fill="#fdfdfd"/><rect x="9.6" y="0.6" width="1.4" height="9.4" fill="#151515"/><rect x="0.6" y="8.6" width="10.4" height="1.4" fill="#151515"/><rect x="0.6" y="0.6" width="0.8" height="8" fill="#2a3a34"/><rect x="0.6" y="0.6" width="9" height="0.8" fill="#2a3a34" opacity=".6"/><rect x="6.1" y="5.6" width="4.1" height="3.6" fill="#c0102c"/><rect x="5.45" y="0.6" width="0.7" height="8" fill="#3a4a40" opacity=".75"/><rect x="0.6" y="4.95" width="9" height="0.7" fill="#3a4a40" opacity=".8"/></svg>
<div class="a" style="left:580.5px;top:129.5px;width:11px;height:10px;background:#f4f0f2;border-right:2px solid #111;border-bottom:2px solid #111;border-left:1px solid #fff;border-top:1px solid #fff"></div>
<div class="t" style="left:582.7px;top:131.7px;font-size:6.5px;color:#111;font-weight:bold;letter-spacing:-.3px;-webkit-text-stroke:.25px #111">All</div>
<div class="a" style="left:501.5px;top:147.5px;width:5.5px;height:5px;border-right:1.3px solid #222;border-bottom:1.3px solid #222;border-left:1px solid #fff;border-top:1px solid #fff"></div>
<div class="t" style="left:510.5px;top:147.4px;font-size:6.3px;color:#111;font-weight:bold;-webkit-text-stroke:.25px #111">Groups</div>
<div class="a" style="left:546.5px;top:146px;width:29.5px;height:12px;background:#efe9ec;border-right:2px solid #333;border-bottom:2px solid #333;border-top:1px solid #fff;border-left:1px solid #fff"></div>
<div class="t" style="left:551.5px;top:147.4px;font-size:6.8px;color:#444;">All</div>
<div class="a" style="left:566px;top:150.5px;width:5px;height:1.5px;background:#333"></div>
<div class="a" style="left:569.8px;top:148px;width:1.3px;height:4px;background:#333"></div>
<div class="a" style="left:579.5px;top:146px;width:11.5px;height:12px;background:#f4f0f2;border-right:2px solid #111;border-bottom:2px solid #111;border-top:1px solid #fff;border-left:1px solid #fff"></div>
<svg class="a" style="left:581.2px;top:147.8px" width="8" height="8" viewBox="0 0 8 8"><path d="M4,1 L7,3.6 V7 H1 V3.6 Z" fill="#111"/></svg>
<div class="a" style="left:501.5px;top:163.2px;width:5.5px;height:5px;border-right:1.3px solid #222;border-bottom:1.3px solid #222;border-left:1px solid #fff;border-top:1px solid #fff"></div>
<div class="t" style="left:510.5px;top:163.1px;font-size:6.3px;color:#111;font-weight:bold;-webkit-text-stroke:.25px #111">Volumes</div>
<div class="a" style="left:546.5px;top:161.7px;width:29.5px;height:12px;background:#efe9ec;border-right:2px solid #333;border-bottom:2px solid #333;border-top:1px solid #fff;border-left:1px solid #fff"></div>
<div class="t" style="left:551.5px;top:163.1px;font-size:6.8px;color:#444;">All</div>
<div class="a" style="left:566px;top:166.2px;width:5px;height:1.5px;background:#333"></div>
<div class="a" style="left:569.8px;top:163.7px;width:1.3px;height:4px;background:#333"></div>
<div class="a" style="left:579.5px;top:161.7px;width:11.5px;height:12px;background:#f4f0f2;border-right:2px solid #111;border-bottom:2px solid #111;border-top:1px solid #fff;border-left:1px solid #fff"></div>
<svg class="a" style="left:581.2px;top:163.5px" width="8" height="8" viewBox="0 0 8 8"><path d="M4,1 L7,3.6 V7 H1 V3.6 Z" fill="#111"/></svg>
<div class="a" style="left:501.5px;top:178.9px;width:5.5px;height:5px;border-right:1.3px solid #222;border-bottom:1.3px solid #222;border-left:1px solid #fff;border-top:1px solid #fff"></div>
<div class="t" style="left:510.5px;top:178.8px;font-size:6.3px;color:#111;font-weight:bold;-webkit-text-stroke:.25px #111">Faces</div>
<div class="a" style="left:546.5px;top:177.4px;width:29.5px;height:12px;background:#efe9ec;border-right:2px solid #333;border-bottom:2px solid #333;border-top:1px solid #fff;border-left:1px solid #fff"></div>
<div class="t" style="left:551.5px;top:178.8px;font-size:6.8px;color:#444;">All</div>
<div class="a" style="left:566px;top:181.9px;width:5px;height:1.5px;background:#333"></div>
<div class="a" style="left:569.8px;top:179.4px;width:1.3px;height:4px;background:#333"></div>
<div class="a" style="left:579.5px;top:177.4px;width:11.5px;height:12px;background:#f4f0f2;border-right:2px solid #111;border-bottom:2px solid #111;border-top:1px solid #fff;border-left:1px solid #fff"></div>
<svg class="a" style="left:581.2px;top:179.2px" width="8" height="8" viewBox="0 0 8 8"><path d="M4,1 L7,3.6 V7 H1 V3.6 Z" fill="#111"/></svg>
<div class="a" style="left:501.5px;top:194.6px;width:5.5px;height:5px;border-right:1.3px solid #222;border-bottom:1.3px solid #222;border-left:1px solid #fff;border-top:1px solid #fff"></div>
<div class="t" style="left:510.5px;top:194.5px;font-size:6.3px;color:#111;font-weight:bold;-webkit-text-stroke:.25px #111">Edges</div>
<div class="a" style="left:546.5px;top:193.1px;width:29.5px;height:12px;background:#efe9ec;border-right:2px solid #333;border-bottom:2px solid #333;border-top:1px solid #fff;border-left:1px solid #fff"></div>
<div class="t" style="left:551.5px;top:194.5px;font-size:6.8px;color:#444;">All</div>
<div class="a" style="left:566px;top:197.6px;width:5px;height:1.5px;background:#333"></div>
<div class="a" style="left:569.8px;top:195.1px;width:1.3px;height:4px;background:#333"></div>
<div class="a" style="left:579.5px;top:193.1px;width:11.5px;height:12px;background:#f4f0f2;border-right:2px solid #111;border-bottom:2px solid #111;border-top:1px solid #fff;border-left:1px solid #fff"></div>
<svg class="a" style="left:581.2px;top:194.9px" width="8" height="8" viewBox="0 0 8 8"><path d="M4,1 L7,3.6 V7 H1 V3.6 Z" fill="#111"/></svg>
<div class="a" style="left:501.5px;top:210.3px;width:5.5px;height:5px;border-right:1.3px solid #222;border-bottom:1.3px solid #222;border-left:1px solid #fff;border-top:1px solid #fff"></div>
<div class="t" style="left:510.5px;top:210.2px;font-size:6.3px;color:#111;font-weight:bold;-webkit-text-stroke:.25px #111">Vertices</div>
<div class="a" style="left:546.5px;top:208.8px;width:29.5px;height:12px;background:#efe9ec;border-right:2px solid #333;border-bottom:2px solid #333;border-top:1px solid #fff;border-left:1px solid #fff"></div>
<div class="t" style="left:551.5px;top:210.2px;font-size:6.8px;color:#444;">All</div>
<div class="a" style="left:566px;top:213.3px;width:5px;height:1.5px;background:#333"></div>
<div class="a" style="left:569.8px;top:210.8px;width:1.3px;height:4px;background:#333"></div>
<div class="a" style="left:579.5px;top:208.8px;width:11.5px;height:12px;background:#f4f0f2;border-right:2px solid #111;border-bottom:2px solid #111;border-top:1px solid #fff;border-left:1px solid #fff"></div>
<svg class="a" style="left:581.2px;top:210.6px" width="8" height="8" viewBox="0 0 8 8"><path d="M4,1 L7,3.6 V7 H1 V3.6 Z" fill="#111"/></svg>
<div class="a" style="left:501.5px;top:226px;width:5.5px;height:5px;border-right:1.3px solid #222;border-bottom:1.3px solid #222;border-left:1px solid #fff;border-top:1px solid #fff"></div>
<div class="t" style="left:510.5px;top:225.9px;font-size:6.3px;color:#111;font-weight:bold;-webkit-text-stroke:.25px #111">B. Layers</div>
<div class="a" style="left:546.5px;top:224.5px;width:29.5px;height:12px;background:#efe9ec;border-right:2px solid #333;border-bottom:2px solid #333;border-top:1px solid #fff;border-left:1px solid #fff"></div>
<div class="t" style="left:551.5px;top:225.9px;font-size:6.8px;color:#444;">All</div>
<div class="a" style="left:566px;top:229px;width:5px;height:1.5px;background:#333"></div>
<div class="a" style="left:569.8px;top:226.5px;width:1.3px;height:4px;background:#333"></div>
<div class="a" style="left:579.5px;top:224.5px;width:11.5px;height:12px;background:#f4f0f2;border-right:2px solid #111;border-bottom:2px solid #111;border-top:1px solid #fff;border-left:1px solid #fff"></div>
<svg class="a" style="left:581.2px;top:226.3px" width="8" height="8" viewBox="0 0 8 8"><path d="M4,1 L7,3.6 V7 H1 V3.6 Z" fill="#111"/></svg>
<div class="a" style="left:501.5px;top:241.7px;width:5.5px;height:5px;border-right:1.3px solid #222;border-bottom:1.3px solid #222;border-left:1px solid #fff;border-top:1px solid #fff"></div>
<div class="t" style="left:510.5px;top:241.6px;font-size:6.3px;color:#111;font-weight:bold;-webkit-text-stroke:.25px #111">C. Sys</div>
<div class="a" style="left:546.5px;top:240.2px;width:29.5px;height:12px;background:#efe9ec;border-right:2px solid #333;border-bottom:2px solid #333;border-top:1px solid #fff;border-left:1px solid #fff"></div>
<div class="t" style="left:551.5px;top:241.6px;font-size:6.8px;color:#444;">All</div>
<div class="a" style="left:566px;top:244.7px;width:5px;height:1.5px;background:#333"></div>
<div class="a" style="left:569.8px;top:242.2px;width:1.3px;height:4px;background:#333"></div>
<div class="a" style="left:579.5px;top:240.2px;width:11.5px;height:12px;background:#f4f0f2;border-right:2px solid #111;border-bottom:2px solid #111;border-top:1px solid #fff;border-left:1px solid #fff"></div>
<svg class="a" style="left:581.2px;top:242px" width="8" height="8" viewBox="0 0 8 8"><path d="M4,1 L7,3.6 V7 H1 V3.6 Z" fill="#111"/></svg>
<div class="a" style="left:496px;top:255.5px;width:101px;height:1.2px;background:#333"></div>
<div class="a" style="left:501.5px;top:261.8px;width:5.5px;height:5px;border-right:1.3px solid #222;border-bottom:1.3px solid #222;border-left:1px solid #fff;border-top:1px solid #fff"></div>
<div class="t" style="left:510.5px;top:261.7px;font-size:6.3px;color:#111;font-weight:bold;-webkit-text-stroke:.25px #111">Visible</div>
<svg class="a" style="left:546px;top:260.8px" width="7" height="7" viewBox="0 0 7 7"><path d="M3.5,0 L7,3.5 L3.5,7 L0,3.5 Z" fill="#e8e2e6"/><path d="M3.5,0 L7,3.5 H0 Z" fill="#7a1020"/><path d="M3.5,0 L7,3.5 L3.5,5.5 L0,3.5 Z" fill="#7a1020"/></svg>
<svg class="a" style="left:570px;top:261.3px" width="7" height="7" viewBox="0 0 7 7"><path d="M0.3,2.5 L3.5,6 L6.7,2.5" stroke="#111" stroke-width="1.5" fill="none"/></svg>
<div class="t" style="left:555px;top:261.4px;font-size:6.7px;color:#333;-webkit-text-stroke:.1px #333">On</div>
<div class="t" style="left:579px;top:261.4px;font-size:6.6px;color:#333;-webkit-text-stroke:.1px #333">Off</div>
<div class="a" style="left:501.5px;top:276px;width:5.5px;height:5px;border-right:1.3px solid #222;border-bottom:1.3px solid #222;border-left:1px solid #fff;border-top:1px solid #fff"></div>
<div class="t" style="left:510.5px;top:275.9px;font-size:6.3px;color:#111;font-weight:bold;-webkit-text-stroke:.25px #111">Label</div>
<svg class="a" style="left:546px;top:275.5px" width="7" height="7" viewBox="0 0 7 7"><path d="M0.3,2.5 L3.5,6 L6.7,2.5" stroke="#111" stroke-width="1.5" fill="none"/></svg>
<svg class="a" style="left:570px;top:275px" width="7" height="7" viewBox="0 0 7 7"><path d="M3.5,0 L7,3.5 L3.5,7 L0,3.5 Z" fill="#e8e2e6"/><path d="M3.5,0 L7,3.5 H0 Z" fill="#7a1020"/><path d="M3.5,0 L7,3.5 L3.5,5.5 L0,3.5 Z" fill="#7a1020"/></svg>
<div class="t" style="left:555px;top:275.6px;font-size:6.7px;color:#333;-webkit-text-stroke:.1px #333">On</div>
<div class="t" style="left:579px;top:275.6px;font-size:6.6px;color:#333;-webkit-text-stroke:.1px #333">Off</div>
<div class="a" style="left:501.5px;top:290.2px;width:5.5px;height:5px;border-right:1.3px solid #222;border-bottom:1.3px solid #222;border-left:1px solid #fff;border-top:1px solid #fff"></div>
<div class="t" style="left:510.5px;top:290.1px;font-size:6.3px;color:#111;font-weight:bold;-webkit-text-stroke:.25px #111">Silhouette</div>
<svg class="a" style="left:546px;top:289.2px" width="7" height="7" viewBox="0 0 7 7"><path d="M3.5,0 L7,3.5 L3.5,7 L0,3.5 Z" fill="#e8e2e6"/><path d="M3.5,0 L7,3.5 H0 Z" fill="#7a1020"/><path d="M3.5,0 L7,3.5 L3.5,5.5 L0,3.5 Z" fill="#7a1020"/></svg>
<svg class="a" style="left:570px;top:289.7px" width="7" height="7" viewBox="0 0 7 7"><path d="M0.3,2.5 L3.5,6 L6.7,2.5" stroke="#111" stroke-width="1.5" fill="none"/></svg>
<div class="t" style="left:555px;top:289.8px;font-size:6.7px;color:#333;-webkit-text-stroke:.1px #333">On</div>
<div class="t" style="left:579px;top:289.8px;font-size:6.6px;color:#333;-webkit-text-stroke:.1px #333">Off</div>
<div class="a" style="left:501.5px;top:304.4px;width:5.5px;height:5px;border-right:1.3px solid #222;border-bottom:1.3px solid #222;border-left:1px solid #fff;border-top:1px solid #fff"></div>
<div class="t" style="left:510.5px;top:304.3px;font-size:6.3px;color:#111;font-weight:bold;-webkit-text-stroke:.25px #111">Mesh</div>
<svg class="a" style="left:546px;top:303.9px" width="7" height="7" viewBox="0 0 7 7"><path d="M0.3,2.5 L3.5,6 L6.7,2.5" stroke="#111" stroke-width="1.5" fill="none"/></svg>
<svg class="a" style="left:570px;top:303.4px" width="7" height="7" viewBox="0 0 7 7"><path d="M3.5,0 L7,3.5 L3.5,7 L0,3.5 Z" fill="#e8e2e6"/><path d="M3.5,0 L7,3.5 H0 Z" fill="#7a1020"/><path d="M3.5,0 L7,3.5 L3.5,5.5 L0,3.5 Z" fill="#7a1020"/></svg>
<div class="t" style="left:555px;top:304px;font-size:6.7px;color:#333;-webkit-text-stroke:.1px #333">On</div>
<div class="t" style="left:579px;top:304px;font-size:6.6px;color:#333;-webkit-text-stroke:.1px #333">Off</div>
<div class="a" style="left:501.5px;top:318.3px;width:5.5px;height:5px;border-right:1.3px solid #222;border-bottom:1.3px solid #222;border-left:1px solid #fff;border-top:1px solid #fff"></div>
<div class="t" style="left:510.5px;top:318.2px;font-size:6.3px;color:#111;font-weight:bold;-webkit-text-stroke:.25px #111">Render</div>
<div class="a" style="left:548px;top:316px;width:38px;height:12.5px;background:#efe9ec;border-right:2px solid #333;border-bottom:2px solid #333;border-top:1px solid #fff;border-left:1px solid #fff"></div>
<div class="t" style="left:553.5px;top:318.2px;font-size:6.8px;color:#444;letter-spacing:.4px">Wire</div>
<div class="a" style="left:575.5px;top:322.5px;width:5px;height:1.5px;background:#333"></div>
<div class="a" style="left:579.3px;top:320px;width:1.3px;height:4px;background:#333"></div>
<div class="a" style="left:501.5px;top:332.7px;width:5.5px;height:5px;border-right:1.3px solid #222;border-bottom:1.3px solid #222;border-left:1px solid #fff;border-top:1px solid #fff"></div>
<div class="t" style="left:510.5px;top:332.6px;font-size:6.4px;color:#111;font-weight:bold;-webkit-text-stroke:.25px #111">Lower topology</div>
<div class="a" style="left:497.5px;top:344px;width:31px;height:11px;background:#d8d6d8;border-right:2px solid #222;border-bottom:2px solid #222;border-top:1px solid #f4f4f4;border-left:1px solid #f4f4f4"></div>
<div class="t" style="left:503.6px;top:346px;font-size:6.8px;color:#111;font-weight:bold;-webkit-text-stroke:.25px #111">Apply</div>
<div class="a" style="left:532px;top:344px;width:30px;height:11px;background:#d8d6d8;border-right:2px solid #222;border-bottom:2px solid #222;border-top:1px solid #f4f4f4;border-left:1px solid #f4f4f4"></div>
<div class="t" style="left:537.5px;top:346px;font-size:6.8px;color:#111;font-weight:bold;-webkit-text-stroke:.25px #111">Reset</div>
<div class="a" style="left:565px;top:344px;width:31px;height:11px;background:#d8d6d8;border-right:2px solid #222;border-bottom:2px solid #222;border-top:1px solid #f4f4f4;border-left:1px solid #f4f4f4"></div>
<div class="t" style="left:570.5px;top:346px;font-size:6.8px;color:#111;font-weight:bold;-webkit-text-stroke:.25px #111">Close</div>
<div class="a" style="left:494px;top:358px;width:105px;height:3px;background:#c6c9d7"></div>
<div class="a" style="left:494px;top:361.5px;width:105px;height:2px;background:#5a5a66"></div>
<div class="t" style="left:524.3px;top:370px;font-size:6.1px;color:#111;font-weight:bold;-webkit-text-stroke:.25px #111">Global Control</div>
<div class="t" style="left:499.6px;top:385.8px;font-size:6.4px;color:#111;font-weight:bold;-webkit-text-stroke:.25px #111">Active</div>
<svg class="a" style="left:527px;top:383.5px" width="11.5" height="11" viewBox="0 0 11.5 11"><rect x="0" y="0" width="11.5" height="11" fill="#fdfdfd"/><rect x="10.1" y="0.6" width="1.4" height="10.4" fill="#151515"/><rect x="0.6" y="9.6" width="10.9" height="1.4" fill="#151515"/><rect x="0.6" y="0.6" width="0.8" height="9" fill="#2a3a34"/><rect x="0.6" y="0.6" width="9.5" height="0.8" fill="#2a3a34" opacity=".6"/><rect x="1.4" y="1.4" width="4.35" height="4.1" fill="#c0102c"/><rect x="5.7" y="0.6" width="0.7" height="9" fill="#3a4a40" opacity=".75"/><rect x="0.6" y="5.45" width="9.5" height="0.7" fill="#3a4a40" opacity=".8"/></svg>
<svg class="a" style="left:540px;top:383.5px" width="11.5" height="11" viewBox="0 0 11.5 11"><rect x="0" y="0" width="11.5" height="11" fill="#fdfdfd"/><rect x="10.1" y="0.6" width="1.4" height="10.4" fill="#151515"/><rect x="0.6" y="9.6" width="10.9" height="1.4" fill="#151515"/><rect x="0.6" y="0.6" width="0.8" height="9" fill="#2a3a34"/><rect x="0.6" y="0.6" width="9.5" height="0.8" fill="#2a3a34" opacity=".6"/><rect x="6.35" y="1.4" width="4.35" height="4.1" fill="#c0102c"/><rect x="5.7" y="0.6" width="0.7" height="9" fill="#3a4a40" opacity=".75"/><rect x="0.6" y="5.45" width="9.5" height="0.7" fill="#3a4a40" opacity=".8"/></svg>
<svg class="a" style="left:553.5px;top:383.5px" width="11.5" height="11" viewBox="0 0 11.5 11"><rect x="0" y="0" width="11.5" height="11" fill="#fdfdfd"/><rect x="10.1" y="0.6" width="1.4" height="10.4" fill="#151515"/><rect x="0.6" y="9.6" width="10.9" height="1.4" fill="#151515"/><rect x="0.6" y="0.6" width="0.8" height="9" fill="#2a3a34"/><rect x="0.6" y="0.6" width="9.5" height="0.8" fill="#2a3a34" opacity=".6"/><rect x="1.4" y="6.1" width="4.35" height="4.1" fill="#c0102c"/><rect x="5.7" y="0.6" width="0.7" height="9" fill="#3a4a40" opacity=".75"/><rect x="0.6" y="5.45" width="9.5" height="0.7" fill="#3a4a40" opacity=".8"/></svg>
<svg class="a" style="left:566.7px;top:383.5px" width="11.5" height="11" viewBox="0 0 11.5 11"><rect x="0" y="0" width="11.5" height="11" fill="#fdfdfd"/><rect x="10.1" y="0.6" width="1.4" height="10.4" fill="#151515"/><rect x="0.6" y="9.6" width="10.9" height="1.4" fill="#151515"/><rect x="0.6" y="0.6" width="0.8" height="9" fill="#2a3a34"/><rect x="0.6" y="0.6" width="9.5" height="0.8" fill="#2a3a34" opacity=".6"/><rect x="6.35" y="6.1" width="4.35" height="4.1" fill="#c0102c"/><rect x="5.7" y="0.6" width="0.7" height="9" fill="#3a4a40" opacity=".75"/><rect x="0.6" y="5.45" width="9.5" height="0.7" fill="#3a4a40" opacity=".8"/></svg>
<div class="a" style="left:579.5px;top:383.5px;width:11.5px;height:11px;background:#f4f0f2;border-right:2px solid #111;border-bottom:2px solid #111;border-left:1px solid #fff;border-top:1px solid #fff"></div>
<div class="t" style="left:581.7px;top:385.7px;font-size:6.5px;color:#111;font-weight:bold;letter-spacing:-.3px;-webkit-text-stroke:.25px #111">All</div>
<div class="a" style="left:500px;top:401.4px;width:16.8px;height:21.5px;background:#f4f0f2;border-right:2px solid #111;border-bottom:2px solid #111;border-top:1px solid #fff;border-left:1px solid #fff"></div>
<svg class="a" style="left:511.8px;top:402.4px" width="5" height="5" viewBox="0 0 5 5"><path d="M5,0 V5 H0 Z" fill="#111"/></svg>
<svg class="a" style="left:500px;top:401.4px" width="16" height="21" viewBox="0 0 16 21"><rect x="2" y="3" width="9" height="2.5" fill="#a01020"/><rect x="2" y="5.5" width="9" height="6" fill="#fff"/><path d="M2.5,7 L5,11 L10,4.5" stroke="#111" stroke-width="1.6" fill="none"/><path d="M2,13 Q5,12 7,15 Q6,18 2.5,16.5 Z" fill="#2030c0"/><rect x="8" y="11" width="6.5" height="7" fill="#a81020"/><rect x="9.8" y="13" width="3" height="3" fill="#fde8ec"/></svg>
<div class="a" style="left:500px;top:424.5px;width:16.8px;height:21.5px;background:#f4f0f2;border:2px solid #111;border-right-width:2.5px;border-bottom-width:2.5px"></div>
<svg class="a" style="left:500px;top:424.5px" width="16" height="21" viewBox="0 0 16 21"><path d="M4,3 V16 M4,15 H14 M2.8,5 L4,3 L5.2,5" stroke="#222" stroke-width="0.8" fill="none"/><path d="M7,4 L8,5.5 L9,4 M8,5.5 V7 M7,9 H9 L7,11 H9 M11,9 L13,11 M13,9 L11,11" stroke="#222" stroke-width="0.8" fill="none"/><circle cx="3.5" cy="15" r="1.8" stroke="#222" stroke-width="0.8" fill="none"/><path d="M3,17 L1.5,18.5" stroke="#222" stroke-width=".8"/></svg>
<div class="a" style="left:518.6px;top:401.4px;width:16.8px;height:21.5px;background:#f4f0f2;border-right:2px solid #111;border-bottom:2px solid #111;border-top:1px solid #fff;border-left:1px solid #fff"></div>
<svg class="a" style="left:530.4px;top:402.4px" width="5" height="5" viewBox="0 0 5 5"><path d="M5,0 V5 H0 Z" fill="#111"/></svg>
<svg class="a" style="left:518.6px;top:401.4px" width="16" height="21" viewBox="0 0 16 21"><path d="M8,2.5 L14.5,10 L8,18 L1.5,10 Z" fill="#f01010" stroke="#f01010" stroke-width="2" stroke-linejoin="round"/><circle cx="8" cy="10" r="0.8" fill="#600"/></svg>
<div class="a" style="left:518.6px;top:424.5px;width:16.8px;height:21.5px;background:#f4f0f2;border-right:2px solid #111;border-bottom:2px solid #111;border-top:1px solid #fff;border-left:1px solid #fff"></div>
<svg class="a" style="left:530.4px;top:425.5px" width="5" height="5" viewBox="0 0 5 5"><path d="M5,0 V5 H0 Z" fill="#111"/></svg>
<svg class="a" style="left:518.6px;top:424.5px" width="16" height="21" viewBox="0 0 16 21"><path d="M1.5,5 H9 V8 H4 V14 H10 V17 H1.5 Z" fill="#c81020"/><rect x="4" y="8" width="5.5" height="6" fill="#fff"/><rect x="9" y="8" width="2" height="8" fill="#c81020"/><rect x="9.5" y="2.5" width="5" height="10" fill="#7a9898" stroke="#222" stroke-width="0.8"/><path d="M10,5.5 H14 M10,8.5 H14 M12,3 V12" stroke="#222" stroke-width="0.7"/></svg>
<div class="a" style="left:538.4px;top:401.4px;width:16.8px;height:21.5px;background:#f4f0f2;border-right:2px solid #111;border-bottom:2px solid #111;border-top:1px solid #fff;border-left:1px solid #fff"></div>
<svg class="a" style="left:550.2px;top:402.4px" width="5" height="5" viewBox="0 0 5 5"><path d="M5,0 V5 H0 Z" fill="#111"/></svg>
<svg class="a" style="left:538.4px;top:401.4px" width="16" height="21" viewBox="0 0 16 21"><rect x="1.5" y="3" width="13" height="14" fill="#c81028"/><path d="M3,5 L4.5,7 L6,5 M4.5,7 V9 M9,5 L12,9 M12,5 L9,9 M3,11 H6 L3,15 H6 M9,11 L12,15 M12,11 L9,15" stroke="#f8b0b8" stroke-width="0.9" fill="none"/></svg>
<div class="a" style="left:538.4px;top:424.5px;width:16.8px;height:21.5px;background:#f4f0f2;border-right:2px solid #111;border-bottom:2px solid #111;border-top:1px solid #fff;border-left:1px solid #fff"></div>
<svg class="a" style="left:550.2px;top:425.5px" width="5" height="5" viewBox="0 0 5 5"><path d="M5,0 V5 H0 Z" fill="#111"/></svg>
<svg class="a" style="left:538.4px;top:424.5px" width="16" height="21" viewBox="0 0 16 21"><path d="M2,8 L5,5 H14 V13 L11,16 H2 Z" fill="#587070"/><path d="M2,8 H11 V16 M11,8 L14,5" stroke="#a0b8b8" stroke-width="0.7" fill="none"/><rect x="1" y="17" width="1.2" height="2" fill="#222"/></svg>
<div class="a" style="left:557.3px;top:401.4px;width:16.8px;height:21.5px;background:#f4f0f2;border-right:2px solid #111;border-bottom:2px solid #111;border-top:1px solid #fff;border-left:1px solid #fff"></div>
<svg class="a" style="left:569.1px;top:402.4px" width="5" height="5" viewBox="0 0 5 5"><path d="M5,0 V5 H0 Z" fill="#111"/></svg>
<svg class="a" style="left:557.3px;top:401.4px" width="16" height="21" viewBox="0 0 16 21"><rect x="1.5" y="10" width="6.5" height="5" fill="#fff" stroke="#111" stroke-width="1"/><path d="M8.5,10 L14,4 M9.5,11 L14,7 M7.5,8 L12,3" stroke="#c8c030" stroke-width="1"/><rect x="1" y="17" width="3" height="1.5" fill="#901020"/></svg>
<div class="a" style="left:557.3px;top:424.5px;width:16.8px;height:21.5px;background:#f4f0f2;border-right:2px solid #111;border-bottom:2px solid #111;border-top:1px solid #fff;border-left:1px solid #fff"></div>
<svg class="a" style="left:569.1px;top:425.5px" width="5" height="5" viewBox="0 0 5 5"><path d="M5,0 V5 H0 Z" fill="#111"/></svg>
<svg class="a" style="left:557.3px;top:424.5px" width="16" height="21" viewBox="0 0 16 21"><rect x="1.5" y="4" width="4.5" height="5" fill="#d01010"/><rect x="1.5" y="9" width="4.5" height="4" fill="#20a030"/><rect x="1.5" y="13" width="4.5" height="5" fill="#2030c0"/><path d="M6.5,11 H9.5" stroke="#111" stroke-width="1.3"/><circle cx="12.5" cy="5.5" r="1.8" fill="#30a0a8"/><circle cx="12.5" cy="9" r="1.3" fill="#30a0a8"/><path d="M11.5,11 V17 M11,13.5 H13 M11,16.5 H13" stroke="#111" stroke-width="1"/></svg>
<div class="a" style="left:576.6px;top:401.4px;width:16.8px;height:21.5px;background:#f4f0f2;border-right:2px solid #111;border-bottom:2px solid #111;border-top:1px solid #fff;border-left:1px solid #fff"></div>
<svg class="a" style="left:588.4px;top:402.4px" width="5" height="5" viewBox="0 0 5 5"><path d="M5,0 V5 H0 Z" fill="#111"/></svg>
<svg class="a" style="left:576.6px;top:401.4px" width="16" height="21" viewBox="0 0 16 21"><path d="M1,8 L5.5,4.5 V6.5 H11 Q15,6.5 14,10 Q13,12.5 10.5,11.5 H5.5 V11.5 Z" fill="#38d0e0" stroke="#208898" stroke-width=".5"/><path d="M5,14 H11 Q14.5,14 14,10.5" stroke="#111" stroke-width="1" fill="none"/><rect x="1" y="17" width="2" height="1.5" fill="#111"/></svg>
<div class="a" style="left:576.6px;top:424.5px;width:16.8px;height:21.5px;background:#f4f0f2;border-right:2px solid #111;border-bottom:2px solid #111;border-top:1px solid #fff;border-left:1px solid #fff"></div>
<svg class="a" style="left:588.4px;top:425.5px" width="5" height="5" viewBox="0 0 5 5"><path d="M5,0 V5 H0 Z" fill="#111"/></svg>
<svg class="a" style="left:576.6px;top:424.5px" width="16" height="21" viewBox="0 0 16 21"><rect x="1" y="3" width="13.5" height="14.5" fill="#e8e820"/><path d="M1,6 H14.5 M1,9 H14.5 M1,12 H14.5 M1,15 H14.5 M4,3 V17.5 M7,3 V17.5 M10,3 V17.5 M13,3 V17.5" stroke="#a8a010" stroke-width="0.6"/><circle cx="6.5" cy="8" r="4.2" fill="#40d8e8" stroke="#111" stroke-width="1.1"/><path d="M9.5,11 L14.5,16.5" stroke="#111" stroke-width="2.2"/></svg>
<div class="a" style="left:601px;top:418px;width:3px;height:20px;background:#1c2c3c"></div>
<div class="a" style="left:78px;top:396px;width:409px;height:3.5px;background:#e6e6ec"></div>
<div class="a" style="left:78px;top:399.5px;width:409px;height:1px;background:#444"></div>
<div class="a" style="left:78px;top:400.5px;width:303px;height:13.5px;background:#c6c9d7"></div>
<div class="t" style="left:208.3px;top:404px;font-size:6.5px;color:#111;font-weight:bold;-webkit-text-stroke:.25px #111">Transcript</div>
<div class="a" style="left:79px;top:414px;width:292px;height:17px;background:#f8f8f8;border-left:2px solid #111;border-top:2px solid #111"></div>
<div class="t" style="left:82px;top:417.2px;font-size:6.1px;color:#333;font-family:'Liberation Mono',monospace">Command&gt; save mesh "C:\\Jets-FLUENTs\\9Sigma-2nodul-complete.dbs"</div>
<div class="a" style="left:371px;top:400.5px;width:10px;height:40px;background:#ecebf0"></div>
<svg class="a" style="left:372px;top:404px" width="9" height="9" viewBox="0 0 9 9"><path d="M4.5,0.5 L8.5,4.5 H7 V8.5 H2 V4.5 H0.5 Z" fill="#4a5a6a"/></svg>
<div class="a" style="left:373.5px;top:415px;width:1.2px;height:15px;background:#111"></div>
<svg class="a" style="left:374px;top:415px" width="6" height="16" viewBox="0 0 6 16"><path d="M0.5,0.5 L5,5 H0.5 M5,12 L2,15" stroke="#111" stroke-width="1" fill="none"/></svg>
<div class="a" style="left:79px;top:431.5px;width:292px;height:8px;background:#fafafa;border-top:1.5px solid #111;border-bottom:1.5px solid #111;border-left:2px solid #111"></div>
<div class="a" style="left:316.7px;top:433px;width:54.3px;height:5px;background:#cfcfd4"></div>
<div class="a" style="left:88px;top:436.3px;width:228.7px;height:1.8px;background:#111"></div>
<svg class="a" style="left:363px;top:433px" width="7" height="5" viewBox="0 0 7 5"><path d="M1,4.5 L6,0.5 M3,4 H6" stroke="#111" stroke-width="1" fill="none"/></svg>
<div class="t" style="left:81px;top:432.3px;font-size:5.5px;color:#111;font-weight:bold;-webkit-text-stroke:.25px #111">|-4</div>
<div class="a" style="left:78px;top:439.5px;width:303px;height:14px;background:#dcd8e0"></div>
<div class="t" style="left:79.3px;top:445.5px;font-size:6.2px;color:#111;font-weight:bold;-webkit-text-stroke:.25px #111">Command:</div>
<div class="a" style="left:113.5px;top:440.5px;width:268px;height:12.5px;background:#fbfbfb;border-left:2px solid #111;border-top:2px solid #111"></div>
<div class="a" style="left:116.5px;top:443.5px;width:1px;height:7px;background:#555"></div>
<div class="a" style="left:381px;top:400.5px;width:3.5px;height:53.5px;background:#ecebf0"></div>
<div class="a" style="left:384px;top:400.5px;width:106px;height:13.5px;background:#c6c9d7"></div>
<div class="t" style="left:420px;top:404.4px;font-size:6.2px;color:#111;font-weight:bold;-webkit-text-stroke:.25px #111">Description</div>
<div class="a" style="left:385.5px;top:414px;width:104px;height:39px;background:#f6f6f6;border-left:2px solid #111;border-top:2px solid #111"></div>
<div class="t" style="left:390px;top:417.5px;font-size:6.1px;color:#222;font-family:'Liberation Mono',monospace;-webkit-text-stroke:.2px #222">GRAPHICS WINDOW: UPPER</div>
<div class="t" style="left:390px;top:425px;font-size:6.1px;color:#222;font-family:'Liberation Mono',monospace;-webkit-text-stroke:.2px #222">LEFT QUADRANT</div>
<div class="a" style="left:490px;top:396px;width:3px;height:58px;background:#e6e6ec"></div>
<div class="t" style="left:530px;top:453px;font-size:6.2px;color:#d8ecf6;letter-spacing:2.05px;opacity:.85;font-style:italic">www.fluent.com</div>
<div class="t" style="left:82px;top:453.5px;font-size:5px;color:#a8d0e8;opacity:.6">· · · · · · · · · · · · · · · · · · · · · · · · · · · · · ·</div>
<svg class="a" style="left:6px;top:451px" width="20" height="24" viewBox="0 0 20 24"><defs><linearGradient id="ga" x1="0" y1="0" x2="1" y2="1"><stop offset="0" stop-color="#1c8a1c"/><stop offset=".5" stop-color="#3cc43c"/><stop offset="1" stop-color="#2a9a2a"/></linearGradient></defs><path d="M2,2.5 H17 L14.5,5.5 Q18.5,9 17,14 Q16,18.5 12,21 L10.5,14 Q9,11 7.5,11.5 L4,15.5 Z" fill="url(#ga)" stroke="#186818" stroke-width=".7"/></svg>
<svg class="a" style="left:0;top:0" width="720" height="540" viewBox="0 0 720 540"><circle cx="678.8" cy="466.7" r="6" stroke="#8090b0" stroke-width=".9" fill="none" stroke-dasharray="7 2"/><path d="M681.5,466.7 H675.5 M678,464 L675.2,466.7 L678,469.4" stroke="#1a2a6a" stroke-width="1.8" fill="none"/></svg>
<svg class="a" style="left:0;top:0" width="720" height="540" viewBox="0 0 720 540"><circle cx="702" cy="466.7" r="6" stroke="#8090b0" stroke-width=".9" fill="none" stroke-dasharray="7 2"/><path d="M699,466.7 H705 M702.5,464 L705.3,466.7 L702.5,469.4" stroke="#1a2a6a" stroke-width="1.8" fill="none"/></svg>
<svg class="a" style="left:0;top:481px" width="720" height="59" viewBox="0 0 720 59">
<defs>
<linearGradient id="fg" x1="0" x2="1" y1="0" y2="0"><stop offset="0" stop-color="#1a30c8"/><stop offset=".30" stop-color="#1424c0"/><stop offset=".34" stop-color="#1a2aa0"/><stop offset=".37" stop-color="#242b70"/><stop offset=".40" stop-color="#242b65"/><stop offset="1" stop-color="#242b65"/></linearGradient>
<linearGradient id="fs" x1="0" x2="1" y1="0" y2="0"><stop offset="0" stop-color="#2c6cdc"/><stop offset=".6" stop-color="#2a5cd4"/><stop offset="1" stop-color="#2840b8"/></linearGradient>
<filter id="bl2" x="-20%" y="-50%" width="140%" height="200%"><feGaussianBlur stdDeviation="1.8"/></filter>
</defs>
<rect width="720" height="59" fill="url(#fg)"/>
<path d="M-10,14 C70,13 150,18 205,34 C235,44 255,52 280,64 L-10,64 Z" fill="url(#fs)" filter="url(#bl2)"/>
<path d="M-10,40 C40,42 80,48 110,64 L-10,64 Z" fill="#4a5cc8" opacity=".8" filter="url(#bl2)"/>
</svg>
<svg class="a" style="left:0;top:481px" width="60" height="59" viewBox="0 0 60 59"><defs><linearGradient id="rg" x1="0" y1="0" x2="0.6" y2="1"><stop offset="0" stop-color="#ff4a50"/><stop offset=".5" stop-color="#e81828"/><stop offset="1" stop-color="#b00818"/></linearGradient><clipPath id="rc"><path d="M-10,-10 H70 V70 H-10 V-1.5 L30,29.5 L8,-10 Z"/></clipPath></defs><path clip-path="url(#rc)" fill-rule="evenodd" fill="url(#rg)" d="M9.2,29.5 A20.8,17.4 0 1 0 50.8,29.5 A20.8,17.4 0 1 0 9.2,29.5 Z M15.8,30 A14,13.2 0 1 1 43.8,30 A14,13.2 0 1 1 15.8,30 Z"/><path fill="#e82030" d="M26,6 C36,4.5 47,7 50.5,17 C52,22 51.5,27 49.5,31 C49.5,24 46.5,15 38,10 C34,8 30,7 26,6 Z"/><path d="M27,6.5 Q37,5 44,9" stroke="#ff8890" stroke-width="1" fill="none" opacity=".8"/></svg>
<div class="a ht" style="left:55px;top:509.5px;font-size:15.8px;font-weight:bold;font-style:italic;color:#f4f6ff;letter-spacing:.8px;-webkit-text-stroke:.35px #eef0fa;text-shadow:1px 1px 1px rgba(20,30,90,.5)">PlasmaVenture</div>
</body></html>
